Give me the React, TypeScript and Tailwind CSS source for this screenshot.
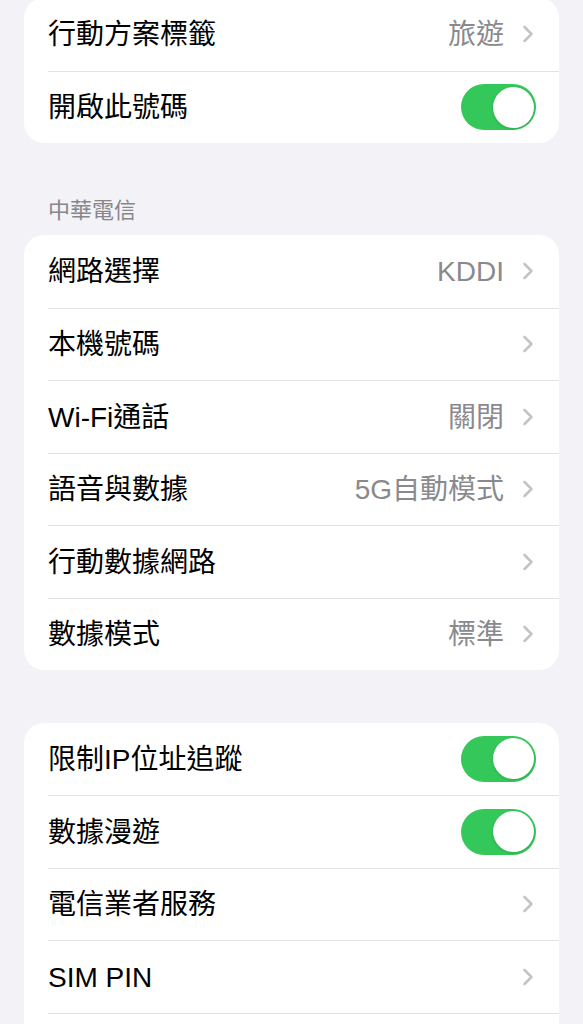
import React from "react";

type Row =
  | { label: string; value?: string; kind: "link" }
  | { label: string; kind: "toggle" };

const font = { fontFamily: '"Liberation Sans", "Noto Sans CJK TC", sans-serif' };

function Chevron() {
  return (
    <svg width="12" height="18" viewBox="0 0 12 18" className="shrink-0">
      <polyline
        points="2.5,2 9.5,9 2.5,16"
        fill="none"
        stroke="#c4c4c7"
        strokeWidth="2.6"
        strokeLinecap="round"
        strokeLinejoin="round"
      />
    </svg>
  );
}

function Toggle() {
  return (
    <div className="w-[75px] h-[46px] rounded-full bg-[#34c759] flex items-center justify-end pr-[2.5px] shrink-0">
      <div className="w-[41px] h-[41px] rounded-full bg-white shadow-[0_1px_3px_rgba(0,0,0,0.15)]" />
    </div>
  );
}

function Card({ rows, className = "" }: { rows: Row[]; className?: string }) {
  return (
    <div className={"bg-white rounded-[20px] overflow-hidden " + className}>
      {rows.map((r, i) => (
        <div key={i} className="pl-[24px]">
          {i > 0 && <div className="h-px bg-[#e2e2e5]" />}
          <div
            className={
              "flex items-center " +
              (i > 0 ? "h-[71.5px] " : "h-[72.5px] ") +
              (r.kind === "toggle" ? "pr-[23px]" : "pr-[25px]")
            }
          >
            <div className="flex-1 pt-[2px] text-[28px] text-black leading-none whitespace-nowrap">
              {r.label}
            </div>
            {r.kind === "toggle" ? (
              <Toggle />
            ) : (
              <div className="flex items-center gap-[18px]">
                {r.value && (
                  <span className="pt-[2px] text-[28px] text-[#8a8a8e] leading-none whitespace-nowrap">
                    {r.value}
                  </span>
                )}
                <Chevron />
              </div>
            )}
          </div>
        </div>
      ))}
    </div>
  );
}

export default function App() {
  return (
    <div className="w-[583px] h-[1024px] overflow-hidden bg-[#f2f2f7] px-[24px]" style={font}>
      <Card
        className="-mt-[2px]"
        rows={[
          { label: "行動方案標籤", value: "旅遊", kind: "link" },
          { label: "開啟此號碼", kind: "toggle" },
        ]}
      />
      <div className="mt-[54px] mb-[10px] pl-[24px] h-[28px] flex items-center text-[22px] text-[#86868b] leading-none">
        中華電信
      </div>
      <Card
        rows={[
          { label: "網路選擇", value: "KDDI", kind: "link" },
          { label: "本機號碼", kind: "link" },
          { label: "Wi-Fi通話", value: "關閉", kind: "link" },
          { label: "語音與數據", value: "5G自動模式", kind: "link" },
          { label: "行動數據網路", kind: "link" },
          { label: "數據模式", value: "標準", kind: "link" },
        ]}
      />
      <Card
        className="mt-[52.5px]"
        rows={[
          { label: "限制IP位址追蹤", kind: "toggle" },
          { label: "數據漫遊", kind: "toggle" },
          { label: "電信業者服務", kind: "link" },
          { label: "SIM PIN", kind: "link" },
          { label: "", kind: "link" },
        ]}
      />
    </div>
  );
}
